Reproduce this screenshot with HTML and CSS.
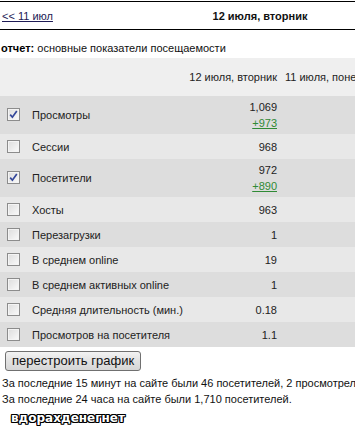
FILE: index.html
```html
<!DOCTYPE html>
<html>
<head>
<meta charset="utf-8">
<link rel="stylesheet" href="styles.css">
</head>
<body>
<div class="page">
  <div class="nav">
    <a class="prev" href="#">&lt;&lt; 11 июл</a>
    <span class="title">12 июля, вторник</span>
  </div>
  <div class="report"><b>отчет:</b> основные показатели посещаемости</div>
  <table class="stats">
    <colgroup><col class="c1"><col class="c2"><col class="c3"></colgroup>
    <tr class="head"><td></td><td class="val">12 июля, вторник</td><td class="next">11 июля, понедельник</td></tr>
    <tr class="dark"><td><span class="cb on"><svg width="9" height="9" viewBox="0 0 9 9"><path d="M1.2 4.6 L3.4 7.2 L7.8 0.9" fill="none" stroke="#34479a" stroke-width="1.7"/></svg></span>Просмотры</td><td class="val">1,069<a class="diff" href="#">+973</a></td><td></td></tr>
    <tr class="light"><td><span class="cb"></span>Сессии</td><td class="val">968</td><td></td></tr>
    <tr class="dark"><td><span class="cb on"><svg width="9" height="9" viewBox="0 0 9 9"><path d="M1.2 4.6 L3.4 7.2 L7.8 0.9" fill="none" stroke="#34479a" stroke-width="1.7"/></svg></span>Посетители</td><td class="val">972<a class="diff" href="#">+890</a></td><td></td></tr>
    <tr class="light"><td><span class="cb"></span>Хосты</td><td class="val">963</td><td></td></tr>
    <tr class="dark"><td><span class="cb"></span>Перезагрузки</td><td class="val">1</td><td></td></tr>
    <tr class="light"><td><span class="cb"></span>В среднем online</td><td class="val">19</td><td></td></tr>
    <tr class="dark"><td><span class="cb"></span>В среднем активных online</td><td class="val">1</td><td></td></tr>
    <tr class="light"><td><span class="cb"></span>Средняя длительность (мин.)</td><td class="val">0.18</td><td></td></tr>
    <tr class="dark"><td><span class="cb"></span>Просмотров на посетителя</td><td class="val">1.1</td><td></td></tr>
  </table>
  <button class="rebuild">перестроить график</button>
  <p class="info">За последние 15 минут на сайте были 46 посетителей, 2 просмотрели страниц.</p>
  <p class="info">За последние 24 часа на сайте были 1,710 посетителей.</p>
  <div class="captcha">вдорахденегнет</div>
</div>
</body>
</html>
```
FILE: styles.css
```css
html, body {
  margin: 0;
  padding: 0;
  background: #fff;
  overflow: hidden;
}
.page {
  font-family: "Liberation Sans", Arial, sans-serif;
  font-size: 11px;
  color: #222;
  width: 600px;
}
.nav {
  margin-top: 1px;
  width: 355px;
  border-top: 1px solid #000;
  border-bottom: 1px solid #000;
  height: 27px;
  display: grid;
  grid-template-columns: 190px 140px 1fr;
  align-items: center;
}
.prev {
  padding-left: 2px;
  color: #1d1a55;
  text-decoration: underline;
}
.title {
  font-weight: bold;
  text-align: center;
  color: #111;
}
.report {
  margin-top: 11px;
  margin-bottom: 2px;
  line-height: 15px;
  padding-left: 1px;
  color: #111;
}
.report b { color: #000; }
.stats {
  border-collapse: collapse;
  table-layout: fixed;
  width: 425px;
}
.c1 { width: 185px; }
.c2 { width: 96px; }
.c3 { width: 144px; }
.stats td {
  box-sizing: content-box;
  padding: 3px 0 3px 7px;
  height: 19px;
  line-height: 16px;
  vertical-align: middle;
  white-space: nowrap;
  overflow: hidden;
}
.stats td.val {
  text-align: right;
  padding: 3px 4px 3px 0;
}
.stats td.next {
  padding-left: 4px;
  text-align: left;
}
.stats tr.head { background: #efefef; }
.stats tr.head td { height: 32px; }
.stats tr.dark { background: #dddddd; }
.stats tr.light { background: #e8e8e8; }
.cb {
  display: inline-block;
  box-sizing: border-box;
  width: 13px;
  height: 13px;
  border: 1px solid #8c8c8c;
  background: linear-gradient(135deg, #dcdcdc, #fbfbfb);
  box-shadow: inset 0 0 0 1px #f4f4f4;
  vertical-align: top;
  margin-top: 1px;
  margin-right: 12px;
  position: relative;
}
.cb svg {
  position: absolute;
  left: 1px;
  top: 1px;
}
.diff {
  display: block;
  color: #2f8a35;
  text-decoration: underline;
}
.rebuild {
  display: block;
  margin: 4px 0 0 5px;
  font-family: "Liberation Sans", Arial, sans-serif;
  font-size: 13px;
  line-height: 16px;
  height: 20px;
  padding: 0 6px;
  color: #111;
  border: 1px solid #707070;
  border-radius: 3px;
  background: linear-gradient(#f3f3f3, #e2e2e2 50%, #d6d6d6);
}
.info {
  margin: 0;
  padding-left: 2px;
  line-height: 16px;
  white-space: nowrap;
  color: #111;
}
.rebuild + .info { margin-top: 4px; }
.captcha {
  margin-top: 3px;
  padding-left: 11px;
  font-family: "DejaVu Sans", sans-serif;
  font-weight: bold;
  font-size: 12px;
  line-height: 16px;
  color: #fff;
  text-shadow: 1px 0 #000, -1px 0 #000, 0 1px #000, 0 -1px #000, 1px 1px #000, -1px -1px #000, 1px -1px #000, -1px 1px #000;
}
```
